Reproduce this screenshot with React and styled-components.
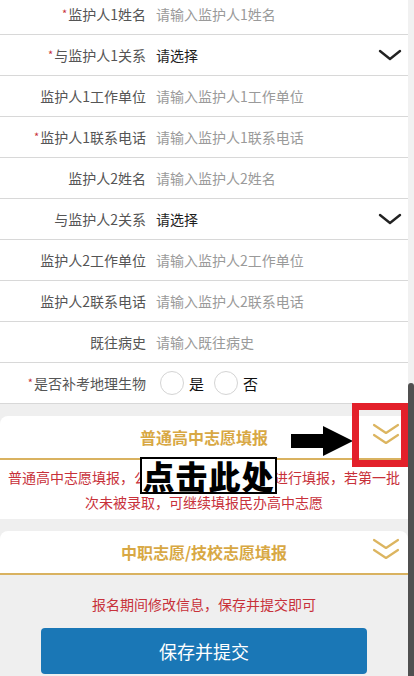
import React from "react";
import styled, { createGlobalStyle } from "styled-components";

const GlobalStyle = createGlobalStyle`
  html, body {
    margin: 0;
    padding: 0;
    background: #efefef;
    font-family: "Noto Sans CJK SC", "Noto Sans", sans-serif;
    overflow: hidden;
  }
`;

const fields = [
  { label: "监护人1姓名", placeholder: "请输入监护人1姓名", required: true },
  { label: "与监护人1关系", select: true, required: true },
  { label: "监护人1工作单位", placeholder: "请输入监护人1工作单位" },
  { label: "监护人1联系电话", placeholder: "请输入监护人1联系电话", required: true },
  { label: "监护人2姓名", placeholder: "请输入监护人2姓名" },
  { label: "与监护人2关系", select: true },
  { label: "监护人2工作单位", placeholder: "请输入监护人2工作单位" },
  { label: "监护人2联系电话", placeholder: "请输入监护人2联系电话" },
  { label: "既往病史", placeholder: "请输入既往病史" },
];

const ChevronDown = () => (
  <svg width="24" height="12" viewBox="0 0 24 12">
    <path d="M2 2 L12 10 L22 2" fill="none" stroke="#222" strokeWidth="2.4" strokeLinecap="round" strokeLinejoin="round" />
  </svg>
);

const DoubleChevron = () => (
  <svg width="30" height="26" viewBox="0 0 30 26">
    <path d="M3 3 L15 11 L27 3" fill="none" stroke="#dcb560" strokeWidth="2.2" strokeLinecap="round" strokeLinejoin="round" />
    <path d="M3 13 L15 21 L27 13" fill="none" stroke="#dcb560" strokeWidth="2.2" strokeLinecap="round" strokeLinejoin="round" />
  </svg>
);

const Arrow = () => (
  <svg width="62" height="30" viewBox="0 0 62 30">
    <path d="M0 8 L32 8 L32 0 L62 15 L32 30 L32 22 L0 22 Z" fill="#000" />
  </svg>
);

const App = () => {
  return (
    <>
      <GlobalStyle />
      <Screen>
        <Content>
          <Form>
            {fields.map((f) => (
              <Row key={f.label}>
                <Label>
                  {f.required && <Star>*</Star>}
                  {f.label}
                </Label>
                {f.select ? (
                  <SelectBox>
                    <span>请选择</span>
                    <ChevronDown />
                  </SelectBox>
                ) : (
                  <Input placeholder={f.placeholder} />
                )}
              </Row>
            ))}
            <Row>
              <Label>
                <Star>*</Star>是否补考地理生物
              </Label>
              <RadioGroup>
                <RadioOption>
                  <Circle />是
                </RadioOption>
                <RadioOption>
                  <Circle />否
                </RadioOption>
              </RadioGroup>
            </Row>
          </Form>

          <Lower>
            <Card>
              <CardHeader>
                <CardTitle>普通高中志愿填报</CardTitle>
                <Toggle>
                  <DoubleChevron />
                </Toggle>
                <PointerArrow>
                  <Arrow />
                </PointerArrow>
                <Highlight />
              </CardHeader>
              <CardBody>
                普通高中志愿填报，公办及民办高中按批次进行填报，若第一批次未被录取，可继续填报民办高中志愿
                <Callout>点击此处</Callout>
              </CardBody>
            </Card>

            <Card>
              <CardHeader>
                <CardTitle>中职志愿/技校志愿填报</CardTitle>
                <Toggle>
                  <DoubleChevron />
                </Toggle>
              </CardHeader>
            </Card>

            <Footer>
              <Notice>报名期间修改信息，保存并提交即可</Notice>
              <SubmitButton>保存并提交</SubmitButton>
            </Footer>
          </Lower>
        </Content>
        <Scrollbar>
          <Thumb />
        </Scrollbar>
      </Screen>
    </>
  );
};

const Screen = styled.div`
  display: flex;
  height: 676px;
  overflow: hidden;
`;

const Content = styled.div`
  width: 408px;
  margin-top: -6px;
`;

const Scrollbar = styled.div`
  width: 6px;
  background: #f1f1f1;
  display: flex;
  flex-direction: column;
  justify-content: flex-end;
`;

const Thumb = styled.div`
  height: 293px;
  background: #505050;
  border-radius: 3px 3px 0 0;
`;

const Form = styled.div`
  background: #fff;
`;

const Row = styled.div`
  display: flex;
  align-items: center;
  height: 40px;
  border-bottom: 1px solid #d8d8d8;
`;

const Label = styled.div`
  width: 146px;
  flex-shrink: 0;
  text-align: right;
  font-size: 14px;
  color: #555;
  margin-right: 10px;
  white-space: nowrap;
`;

const Star = styled.span`
  color: #c8313a;
  font-size: 11px;
  vertical-align: 2px;
  margin-right: 1px;
`;

const Input = styled.input`
  flex: 1;
  border: none;
  outline: none;
  padding: 0;
  font-family: inherit;
  font-size: 14px;
  color: #333;
  background: transparent;
  &::placeholder {
    color: #9a9a9a;
  }
`;

const SelectBox = styled.div`
  flex: 1;
  display: flex;
  align-items: center;
  justify-content: space-between;
  padding-right: 6px;
  font-size: 14px;
  color: #1e1e1e;
`;

const RadioGroup = styled.div`
  display: flex;
  align-items: center;
  gap: 10px;
  margin-left: 4px;
`;

const RadioOption = styled.label`
  display: flex;
  align-items: center;
  gap: 5px;
  font-size: 15px;
  color: #111;
`;

const Circle = styled.span`
  width: 22px;
  height: 22px;
  border-radius: 50%;
  border: 1px solid #d4d4d4;
  background: #fff;
`;

const Lower = styled.div`
  background: #efefef;
  padding-top: 12px;
  display: flex;
  flex-direction: column;
  gap: 12px;
`;

const Card = styled.div`
  background: #fff;
  border-radius: 8px 8px 0 0;
`;

const CardHeader = styled.div`
  position: relative;
  height: 42px;
  display: flex;
  align-items: center;
  justify-content: center;
  border-bottom: 2px solid #d9b260;
`;

const CardTitle = styled.div`
  font-size: 16px;
  font-weight: 700;
  color: #d8a844;
`;

const Toggle = styled.div`
  position: absolute;
  right: 7px;
  top: 6px;
  display: flex;
`;

const PointerArrow = styled.div`
  position: absolute;
  left: 291px;
  top: 10px;
  display: flex;
`;

const Highlight = styled.div`
  position: absolute;
  left: 352px;
  top: -13px;
  width: 56px;
  height: 64px;
  box-sizing: border-box;
  border: 7px solid #e3202a;
`;

const CardBody = styled.div`
  position: relative;
  padding: 5px 2px 4px;
  font-size: 14px;
  line-height: 25px;
  color: #c8313a;
  text-align: center;
`;

const Callout = styled.div`
  position: absolute;
  left: 140px;
  top: -3px;
  width: 137px;
  height: 37px;
  box-sizing: border-box;
  border: 2px solid #000;
  background: #fff;
  color: #000;
  font-size: 32px;
  font-weight: 900;
  line-height: 33px;
  letter-spacing: 1px;
  text-align: center;
`;

const Footer = styled.div`
  display: flex;
  flex-direction: column;
  align-items: center;
  padding-top: 6px;
`;

const Notice = styled.div`
  font-size: 14px;
  color: #c8313a;
  line-height: 22px;
  margin-bottom: 13px;
`;

const SubmitButton = styled.button`
  width: 326px;
  height: 46px;
  border: none;
  border-radius: 4px;
  background: #1a77b6;
  color: #fff;
  font-family: inherit;
  font-size: 18px;
  cursor: pointer;
`;

export default App;
